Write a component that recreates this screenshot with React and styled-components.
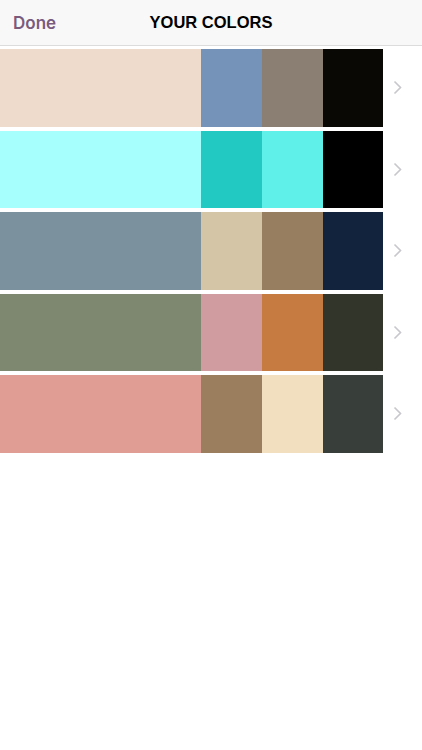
import React from "react";
import styled, { createGlobalStyle } from "styled-components";

const palettes = [
  ["#eedbcb", "#7593b9", "#8b7e72", "#0a0805"],
  ["#a6fefd", "#22c8c2", "#5ff0ea", "#000000"],
  ["#7b919e", "#d3c5a6", "#977e60", "#12233d"],
  ["#7e8871", "#d09ca0", "#c67c41", "#31352a"],
  ["#df9d94", "#9b7e5e", "#f2dfbf", "#383f3b"],
];

const GlobalStyle = createGlobalStyle`
  body {
    margin: 0;
    background: #ffffff;
    font-family: "Liberation Sans", Arial, sans-serif;
  }
`;

const Page = styled.div`
  width: 422px;
  min-height: 750px;
  background: #fff;
`;

const NavBar = styled.header`
  height: 46px;
  background: #f8f8f8;
  border-bottom: 1px solid #dcdcdc;
  display: grid;
  grid-template-columns: 1fr auto 1fr;
  align-items: center;
  padding: 0 13px;
  box-sizing: border-box;
`;

const DoneButton = styled.button`
  justify-self: start;
  border: none;
  background: none;
  padding: 0;
  font-family: Inter, "Liberation Sans", sans-serif;
  font-weight: 600;
  font-size: 17px;
  color: #7a5b7e;
  cursor: pointer;
`;

const Title = styled.h1`
  margin: 0;
  font-size: 16.5px;
  font-weight: 700;
  color: #000;
`;

const List = styled.div`
  display: flex;
  flex-direction: column;
  gap: 4px;
  padding-top: 3px;
`;

const Row = styled.div`
  display: flex;
  height: 77.5px;
  align-items: stretch;
`;

const Swatch = styled.div`
  width: ${(p) => p.$w}px;
  background: ${(p) => p.$color};
`;

const Chevron = styled.div`
  flex: 1;
  display: flex;
  align-items: center;
  padding-left: 10px;
`;

const widths = [201, 61, 61, 60];

export default function App() {
  return (
    <Page>
      <GlobalStyle />
      <NavBar>
        <DoneButton>Done</DoneButton>
        <Title>YOUR COLORS</Title>
        <span />
      </NavBar>
      <List>
        {palettes.map((row, i) => (
          <Row key={i}>
            {row.map((c, j) => (
              <Swatch key={j} $color={c} $w={widths[j]} />
            ))}
            <Chevron>
              <svg width="9" height="15" viewBox="0 0 9 15">
                <path
                  d="M1.5 1.5 L7.5 7.5 L1.5 13.5"
                  fill="none"
                  stroke="#c7c7cc"
                  strokeWidth="1.6"
                />
              </svg>
            </Chevron>
          </Row>
        ))}
      </List>
    </Page>
  );
}
